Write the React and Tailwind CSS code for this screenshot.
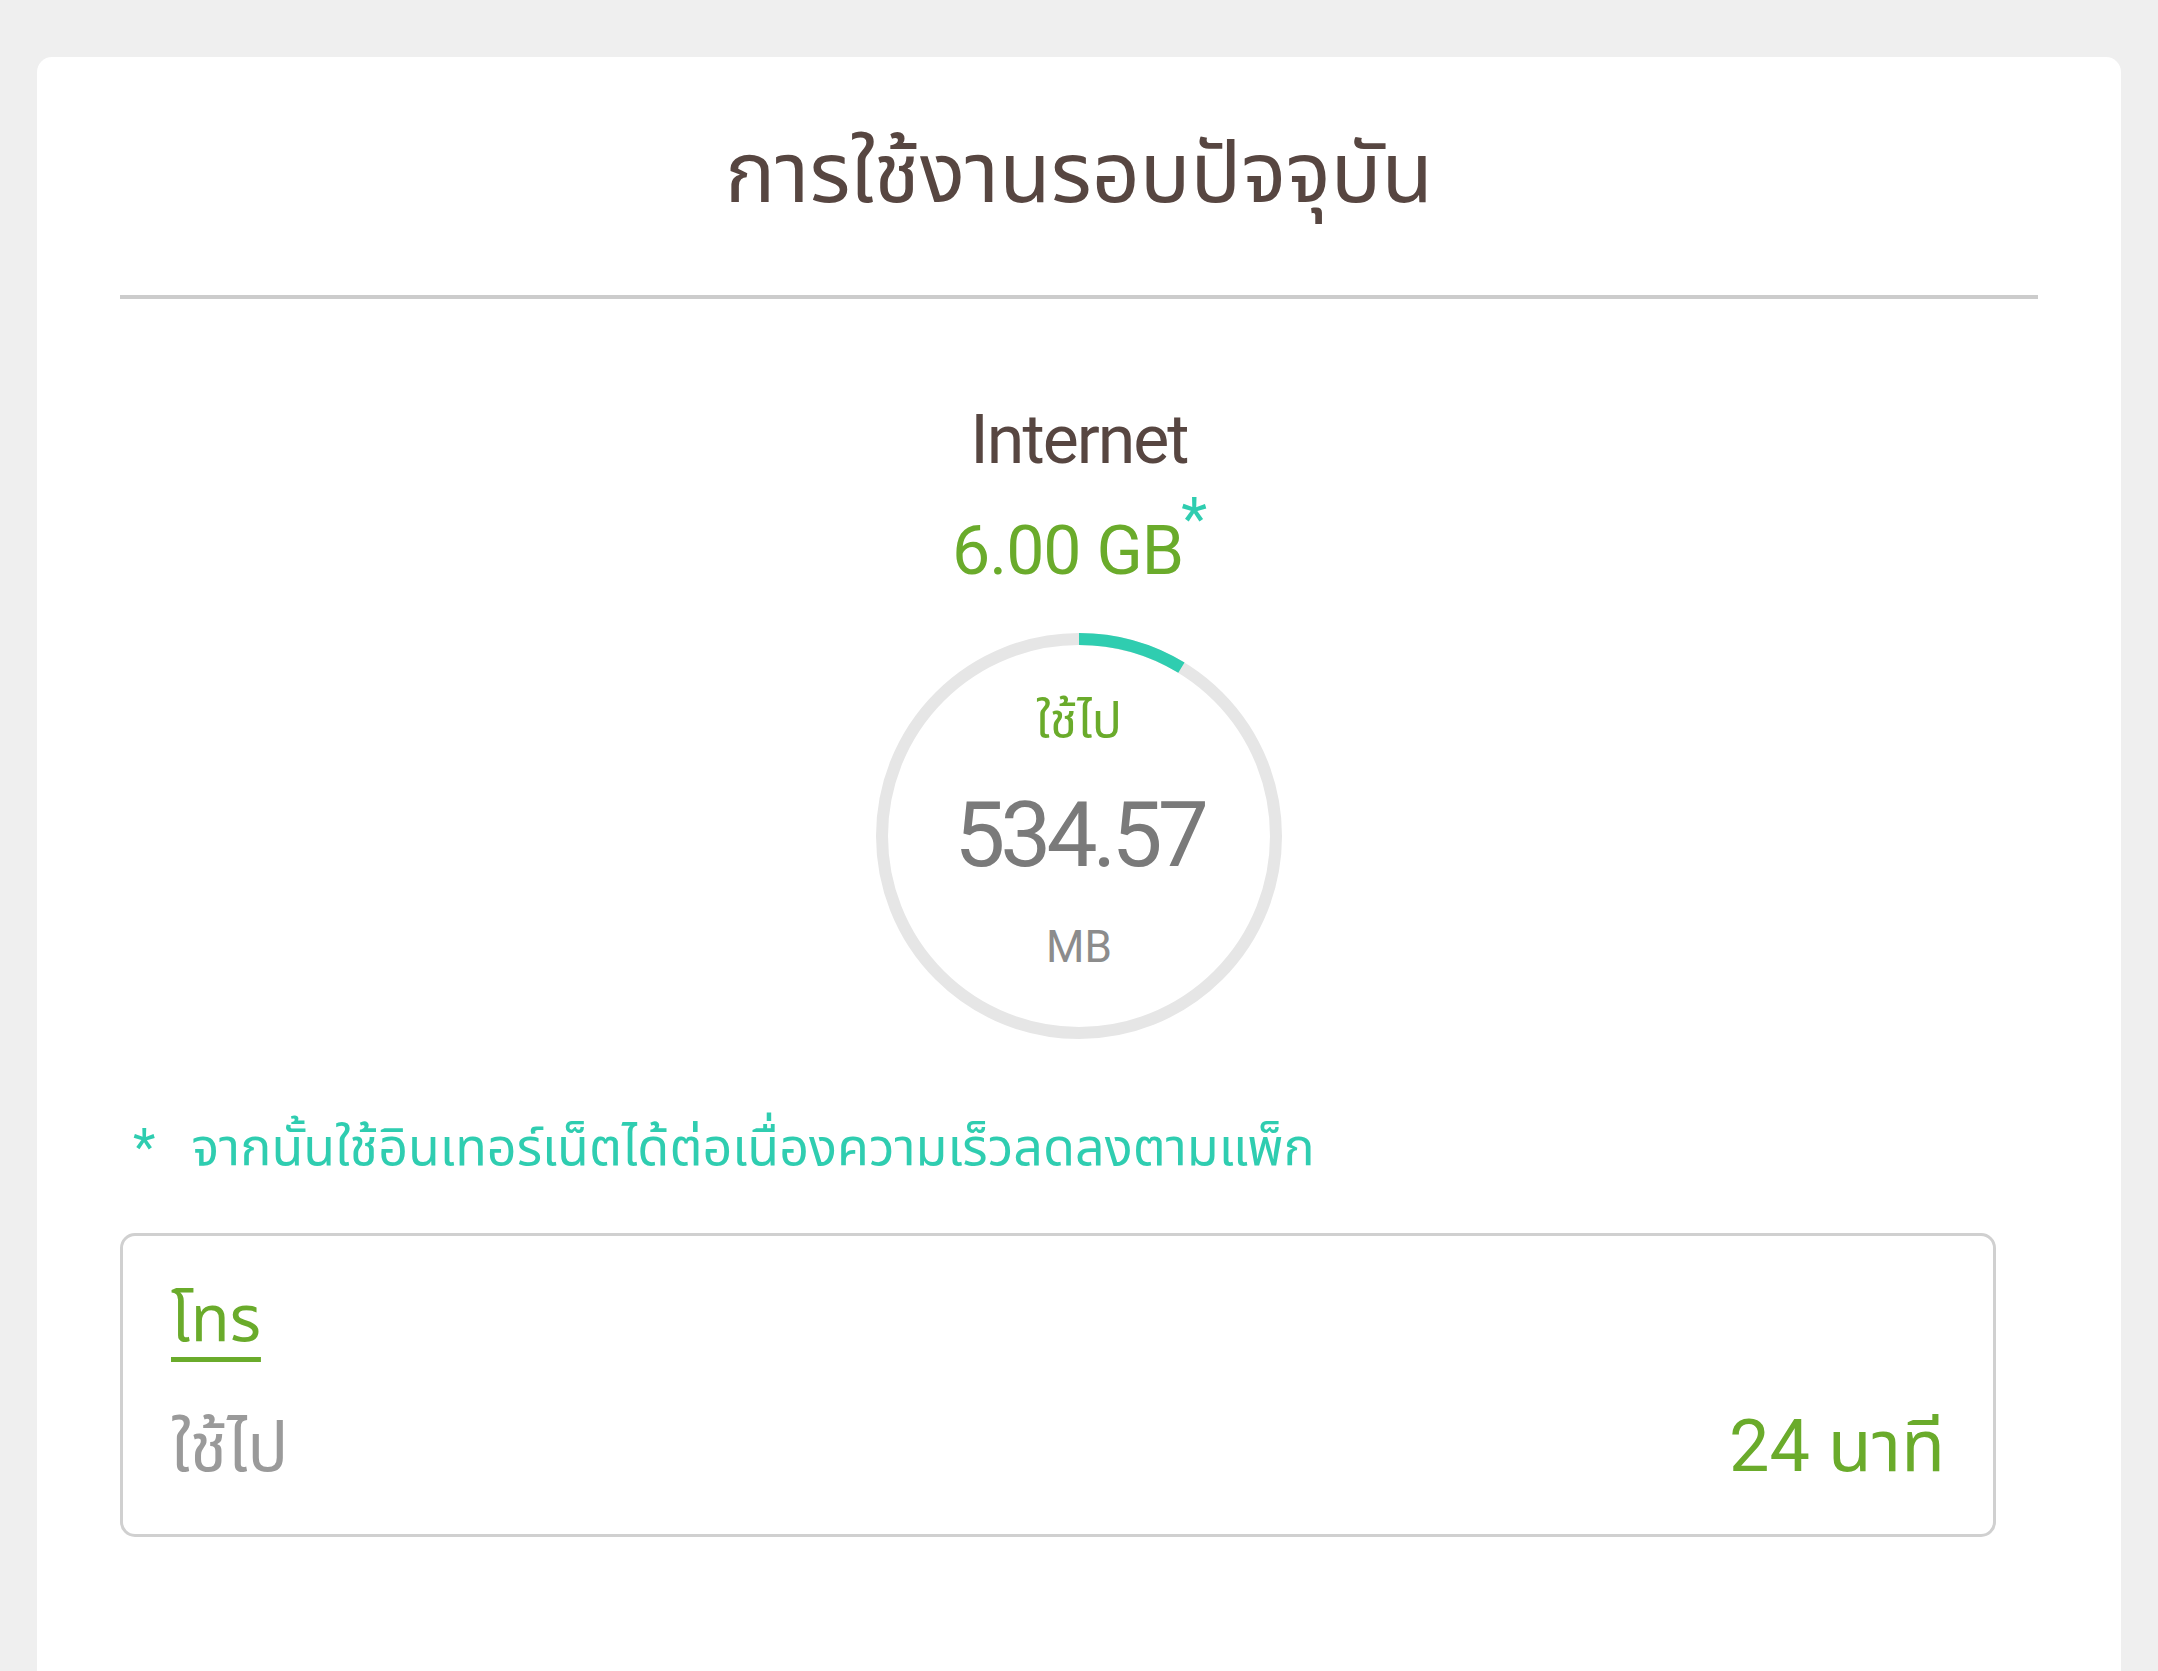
import React from "react";

const font = "font-['Roboto','Noto_Sans_Thai','Noto_Sans',sans-serif]";

const UsageRing = ({ used, total }) => {
	const r = 197;
	const c = 2 * Math.PI * r;
	const pct = used / total;

	return (
		<div className="relative w-[408px] h-[408px]">
			<svg width="408" height="408" viewBox="0 0 408 408" className="-rotate-90">
				<circle cx="204" cy="204" r={r} fill="none" stroke="#e6e6e6" strokeWidth="12" />
				<circle
					cx="204"
					cy="204"
					r={r}
					fill="none"
					stroke="#2fcdb0"
					strokeWidth="12"
					strokeDasharray={`${c * pct} ${c}`}
				/>
			</svg>
			<div className="absolute inset-0 flex flex-col items-center pt-[59px]">
				<span className="text-[50px] leading-[60px] text-[#6aab2b]">ใช้ไป</span>
				<span className="mt-[34px] text-[91px] leading-[100px] tracking-[-5px] text-[#7a7a7a]">534.57</span>
				<span className="mt-[37px] text-[44px] leading-[50px] text-[#8c8c8c]">MB</span>
			</div>
		</div>
	);
};

const App = () => {
	return (
		<div className={`h-[1671px] overflow-hidden bg-[#efefef] pt-[57px] px-[37px] ${font}`}>
			<div className="h-[1700px] bg-white rounded-[15px] px-[83px]">
				<h1 className="pt-[62px] text-center text-[84px] leading-[110px] text-[#574641]">
					การใช้งานรอบปัจจุบัน
				</h1>
				<div className="mt-[66px] h-[4px] bg-[#cccccc]" />

				<div className="mt-[101px] flex flex-col items-center">
					<p className="text-[68px] leading-[80px] tracking-[-2px] text-[#574641]">Internet</p>
					<p className="mt-[31px] text-[68px] leading-[80px] tracking-[-1px] text-[#6aab2b]">
						6.00 GB
						<sup className="text-[60px] text-[#2fcdb0] align-top relative top-[8px] ml-[-2px]">*</sup>
					</p>
					<div className="mt-[41px]">
						<UsageRing used={534.57} total={6144} />
					</div>
				</div>

				<p className="mt-[73px] pl-[13px] text-[52px] leading-[70px] text-[#2fcdb0]">
					<span className="mr-[36px]">*</span>
					จากนั้นใช้อินเทอร์เน็ตได้ต่อเนื่องความเร็วลดลงตามแพ็ก
				</p>

				<div className="mt-[50px] mr-[42px] rounded-[15px] border-[3px] border-[#d0d0d0] px-[48px] pt-[44px] pb-[46px]">
					<a
						href="#"
						className="text-[64px] leading-[80px] text-[#6aab2b] underline decoration-[5px] underline-offset-[16px]"
					>
						โทร
					</a>
					<div className="mt-[47px] flex items-baseline justify-between">
						<span className="text-[68px] leading-[80px] text-[#9a9a9a]">ใช้ไป</span>
						<span className="text-[72px] leading-[80px] text-[#6aab2b]">24 นาที</span>
					</div>
				</div>
			</div>
		</div>
	);
};

export default App;
